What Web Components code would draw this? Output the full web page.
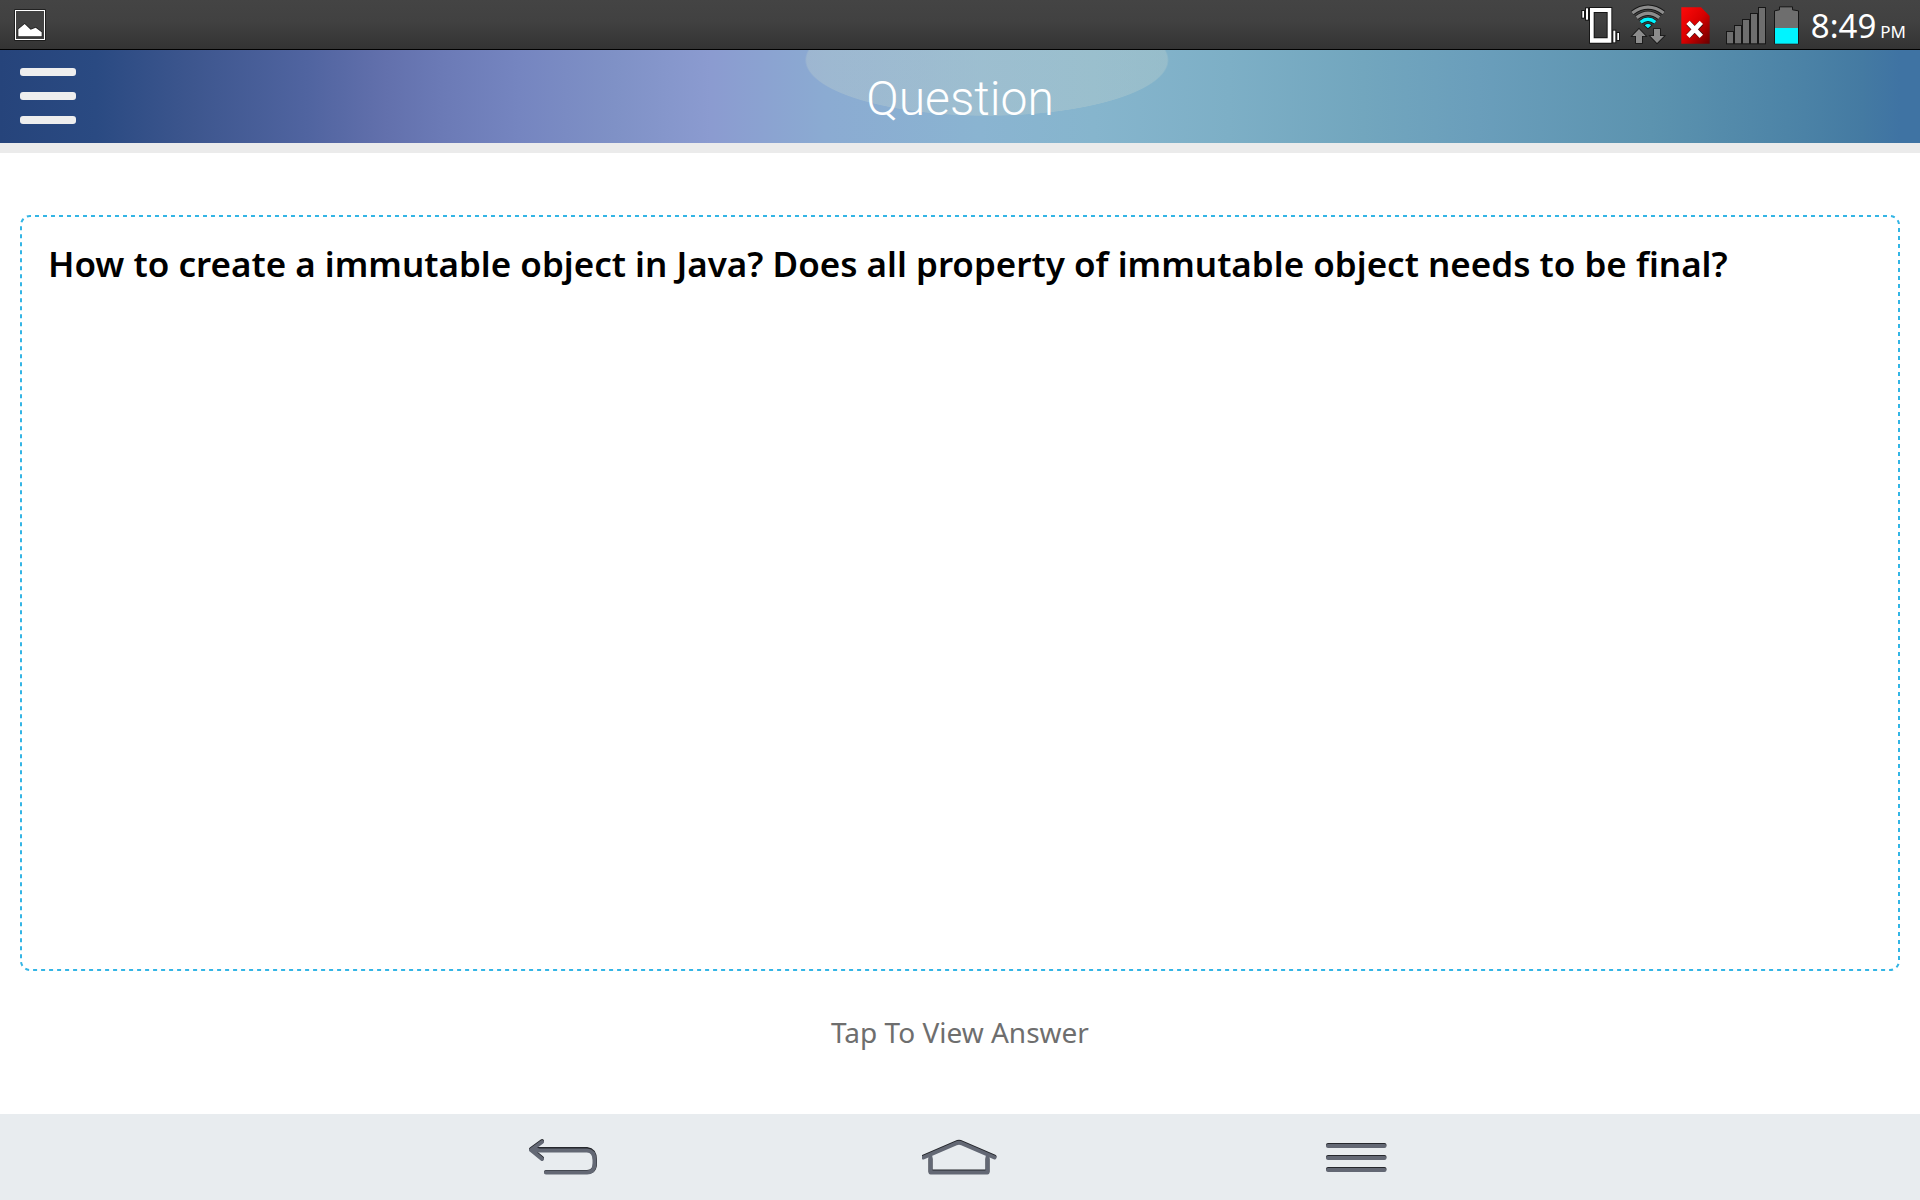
<!DOCTYPE html>
<html lang="en">
<head>
<meta charset="utf-8">
<title>Question</title>
<style>
  html, body { margin: 0; height: 100%; }
  body { background: #fff; font-family: "Noto Sans", "Open Sans", sans-serif; }
</style>
</head>
<body>
<quiz-app>
  <status-bar slot="status" time="8:49" period="PM"></status-bar>
  <app-header slot="header">Question</app-header>
  <question-card>How to create a immutable object in Java? Does all property of immutable object needs to be final?</question-card>
  <reveal-button>Tap To View Answer</reveal-button>
  <nav-bar slot="nav"></nav-bar>
</quiz-app>

<script>
class BaseElement extends HTMLElement {
  constructor() {
    super();
    this.attachShadow({ mode: "open" }).innerHTML = this.template();
  }
}

customElements.define("quiz-app", class extends BaseElement {
  template() {
    return `<style>
      :host { display: flex; flex-direction: column; min-height: 100vh; }
      main { flex: 1; display: flex; flex-direction: column; padding: 62px 20px 0; }
    </style>
    <slot name="status"></slot>
    <slot name="header"></slot>
    <main><slot></slot></main>
    <slot name="nav"></slot>`;
  }
});

customElements.define("status-bar", class extends BaseElement {
  template() {
    return `<style>
      :host { display: flex; align-items: center; justify-content: space-between; height: 49px;
        padding: 0 14px; border-bottom: 1px solid #000; color: #fff;
        background: linear-gradient(#444 0, #414141 45%, #333 100%); }
      svg { display: block; overflow: visible; flex: none; }
      .tray { display: flex; align-items: center; gap: 10px; }
      .clock { display: flex; align-items: baseline; gap: 4px; padding: 8px 0 0 2px; line-height: 40px; }
      .time { font-size: 33px; }
      .period { font-size: 17px; }
    </style>
    <svg width="32" height="49" viewBox="42 0 96 147" role="img" aria-label="Screenshot saved">
      <rect x="43" y="28" width="94" height="94" fill="#111"/>
      <rect x="46.500" y="31.500" width="87" height="87" fill="#424242" stroke="#fff" stroke-width="3"/>
      <path d="M55 109V88L74 72l18 17 15-6 18 14v12z" fill="#fff" stroke="#222" stroke-width="5" paint-order="stroke"/>
    </svg>
    <div class="tray">
      <svg width="40" height="49" viewBox="33 0 120 147" role="img" aria-label="Vibrate">
        <g fill="#fff" stroke="#161616" stroke-width="6" paint-order="stroke">
          <path d="M60 24h64v104H60zM71 36v79h42V36z" fill-rule="evenodd"/>
          <rect x="37" y="33" width="5" height="20"/><rect x="48" y="25" width="6" height="34"/>
          <rect x="130" y="92" width="6" height="35"/><rect x="142" y="99" width="5" height="21"/>
        </g>
      </svg>
      <svg width="35" height="49" viewBox="183 0 105 147" role="img" aria-label="Wi-Fi">
        <g fill="none" stroke="#161616">
          <path d="M187 39Q234 4 281 39" stroke-width="15"/>
          <path d="M200 53Q234 27 268 53" stroke-width="15"/>
          <path d="M212 67Q234 49 256 67" stroke-width="15"/>
          <path d="M187 39Q234 4 281 39" stroke="#8c8c8c" stroke-width="10"/>
          <path d="M200 53Q234 27 268 53" stroke="#8c8c8c" stroke-width="10"/>
          <path d="M212 67Q234 49 256 67" stroke="#00f4ff" stroke-width="10"/>
        </g>
        <path d="M224 76q10-9 20 0l-10 9z" fill="#00f4ff" stroke="#161616" stroke-width="5" paint-order="stroke"/>
        <g fill="#8c8c8c" stroke="#161616" stroke-width="5" paint-order="stroke">
          <path d="M207 87l20 21h-11v21h-18v-21h-11z"/>
          <path d="M252 87h18v21h12l-21 21-20-21h11z"/>
        </g>
      </svg>
      <svg width="40" height="49" viewBox="318 0 120 147" role="img" aria-label="No SIM card">
        <defs><linearGradient id="sim" x1="0" y1="0" x2="1" y2="1">
          <stop offset="0" stop-color="#ff0a0a"/><stop offset=".5" stop-color="#d80000"/><stop offset="1" stop-color="#680000"/>
        </linearGradient></defs>
        <path d="M334 22h59l26 26v83h-85z" fill="url(#sim)"/>
        <path d="M355 69l39 39M394 69l-39 39" stroke="#401010" stroke-width="18"/>
        <path d="M354 67l40 42M394 67l-40 42" stroke="#fff" stroke-width="14"/>
      </svg>
      <svg width="38" height="49" viewBox="468 0 114 147" role="img" aria-label="No signal">
        <g fill="#6e6e6e" stroke="#161616" stroke-width="3">
          <rect x="469.500" y="94.500" width="21" height="37"/>
          <rect x="493.500" y="76.500" width="21" height="55"/>
          <rect x="517.500" y="58.500" width="21" height="73"/>
          <rect x="541.500" y="40.500" width="21" height="91"/>
          <rect x="565.500" y="22.500" width="21" height="109"/>
        </g>
      </svg>
      <svg width="25" height="49" viewBox="612 0 75 147" role="img" aria-label="Battery half full">
        <path d="M613.500 131.500v-99l15-3v-9h39v9l18 3v99z" fill="#6e6e6e" stroke="#161616" stroke-width="3"/>
        <rect x="615" y="84" width="69" height="47" fill="#00f4ff"/>
      </svg>
      <div class="clock"><span class="time"></span><span class="period"></span></div>
    </div>`;
  }
  connectedCallback() {
    this.shadowRoot.querySelector(".time").textContent = this.getAttribute("time");
    this.shadowRoot.querySelector(".period").textContent = this.getAttribute("period");
  }
});

customElements.define("app-header", class extends BaseElement {
  template() {
    return `<style>
      :host { display: grid; grid-template-columns: 1fr auto 1fr; align-items: center; height: 93px;
        padding: 0 20px; border-bottom: 10px solid #ebebeb; color: #fff;
        background:
          radial-gradient(ellipse 182px 56px at 51.4% 10px, rgba(200,214,206,.3) 99%, transparent 100%),
          linear-gradient(90deg, #26447b 0, #2a4a82 5%, #3d568e 10%, #5064a0 16%, #6270ac 20%, #6b7ab6 23%, #7585c0 27%,
            #7f91c6 32%, #8b9bd0 37%, #8babd2 43%, #8ab4d1 51%, #86b5cd 57%, #7dafc6 64%, #72a6be 71%,
            #6a9ebb 77%, #5c93af 86%, #4b82a6 94%, #447aa2 97%, #3f73a3 99%);
        background-clip: padding-box; }
      button { justify-self: start; display: flex; flex-direction: column; gap: 16px; width: 56px;
        margin: 0 0 2px; padding: 0; border: 0; background: none; cursor: pointer; }
      i { display: block; height: 8px; width: 100%; border-radius: 3px; background: #eee; }
      h1 { margin: 0; padding-top: 4px; font: 300 48px/56px Roboto, sans-serif; }
    </style>
    <button type="button" aria-label="Open menu"><i></i><i></i><i></i></button>
    <h1><slot></slot></h1>`;
  }
});

customElements.define("question-card", class extends BaseElement {
  template() {
    return `<style>
      :host { flex: 1; display: grid; }
      svg, p { grid-area: 1 / 1; }
      svg { display: block; width: 100%; height: 100%; min-height: 0; }
      rect { x: 1px; y: 1px; width: calc(100% - 2px); height: calc(100% - 2px); rx: 9px;
        fill: none; stroke: #33b5e5; stroke-width: 2px; stroke-dasharray: 4 4; stroke-dashoffset: 3; }
      p { margin: 0; padding: 24px 28px; font-size: 35px; font-weight: 600; line-height: 49px; color: #000; }
    </style>
    <svg aria-hidden="true"><rect/></svg>
    <p><slot></slot></p>`;
  }
});

customElements.define("reveal-button", class extends BaseElement {
  template() {
    return `<style>
      :host { display: block; }
      button { display: block; width: 100%; height: 143px; margin: 0; padding: 0 0 22px; border: 0;
        background: none; color: #6e6e6e; font: inherit; font-size: 28px; cursor: pointer; }
    </style>
    <button type="button"><slot></slot></button>`;
  }
});

customElements.define("nav-bar", class extends BaseElement {
  template() {
    return `<style>
      :host { display: block; background: #e8ecef; }
      nav { display: flex; justify-content: center; }
      button { width: 397px; height: 86px; margin: 0; padding: 0; border: 0; background: none;
        display: flex; align-items: center; justify-content: center; cursor: pointer; }
      svg { display: block; fill: none; stroke-linecap: round; stroke-linejoin: round; }
      .shade { stroke: #25272c; }
      .face { stroke: #636874; }
    </style>
    <nav aria-label="System">
      <button type="button" aria-label="Back"><svg width="70" height="86" viewBox="0 0 70 86">
        <g stroke-width="4"><path class="shade" d="M14 27L3 35L14 44M7 35H59Q67 36 67 46V49Q67 58 59 58H18"/></g>
        <g stroke-width="4"><path class="face" d="M14 28L3 36L14 45M4 36.500H59Q66.500 37 66.500 46V50Q66.500 58 59 58.500H18M6 36H10"/></g>
      </svg></button>
      <button type="button" aria-label="Home"><svg width="76" height="86" viewBox="1 0 76 86">
        <g stroke-width="4"><path class="shade" d="M2.500 42.500L35 28.500Q38 27 41 28.500L73.500 42.500M9.500 45V57.500H66.500V45"/>
        <path class="face" d="M2.500 43.500L35 29.500Q38 28 41 29.500L73.500 43.500M9.500 43V58.500H66.500V43"/></g>
      </svg></button>
      <button type="button" aria-label="Menu"><svg width="62" height="86" viewBox="1 0 62 86">
        <g stroke-width="4"><path class="shade" d="M3 31H59.500M3 43H59.500M3 55H59.500"/>
        <path class="face" d="M3 32H59.500M3 44H59.500M3 56H59.500"/></g>
      </svg></button>
    </nav>`;
  }
});
</script>
</body>
</html>
